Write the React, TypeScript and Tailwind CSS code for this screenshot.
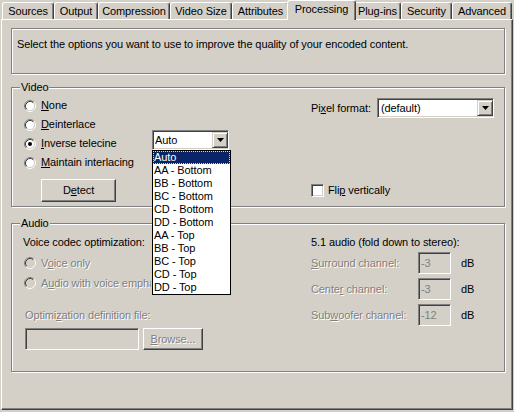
import React from 'react';

const sunken =
    'border border-t-[#808080] border-l-[#808080] border-b-white border-r-white shadow-[inset_1px_1px_0_#404040,inset_-1px_-1px_0_#d4d0c8]';
const raised =
    'border border-t-white border-l-white border-b-[#404040] border-r-[#404040] shadow-[inset_-1px_-1px_0_#808080] bg-[#d4d0c8]';
const etched = 'border border-[#808080] shadow-[inset_1px_1px_0_#fff,1px_1px_0_#fff]';
const dis = 'text-[#808080] [text-shadow:1px_1px_0_#fff]';

const tabs = [
    { label: 'Sources', w: 'w-[52px]' },
    { label: 'Output', w: 'w-[44px]' },
    { label: 'Compression', w: 'w-[72px]' },
    { label: 'Video Size', w: 'w-[62px]' },
    { label: 'Attributes', w: 'w-[57px]' },
    { label: 'Processing', w: 'w-[69px]', active: true },
    { label: 'Plug-ins', w: 'w-[47px]' },
    { label: 'Security', w: 'w-[51px]' },
    { label: 'Advanced', w: 'w-[60px]' },
];

const telecine = [
    'Auto',
    'AA - Bottom',
    'BB - Bottom',
    'BC - Bottom',
    'CD - Bottom',
    'DD - Bottom',
    'AA - Top',
    'BB - Top',
    'BC - Top',
    'CD - Top',
    'DD - Top',
];

function Radio({ checked = false, disabled = false }: { checked?: boolean; disabled?: boolean }) {
    return (
        <svg width="12" height="12" viewBox="0 0 12 12" className="shrink-0">
            <circle cx="6" cy="6" r="4.5" fill={disabled ? '#d4d0c8' : '#fff'} />
            <path d="M2.11 9.89A5.5 5.5 0 0 1 9.89 2.11" fill="none" stroke="#808080" />
            <path d="M9.89 2.11A5.5 5.5 0 0 1 2.11 9.89" fill="none" stroke="#fff" />
            <path d="M2.82 9.18A4.5 4.5 0 0 1 9.18 2.82" fill="none" stroke="#404040" />
            <path d="M9.18 2.82A4.5 4.5 0 0 1 2.82 9.18" fill="none" stroke="#d4d0c8" />
            {checked && <circle cx="6" cy="6" r="2" fill="#000" />}
        </svg>
    );
}

function Arrow() {
    return (
        <div className="border border-t-[#d4d0c8] border-l-[#d4d0c8] border-b-[#404040] border-r-[#404040] shadow-[inset_1px_1px_0_#fff,inset_-1px_-1px_0_#808080] bg-[#d4d0c8] w-[16px] h-[16px] ml-auto flex items-center justify-center">
            <svg width="7" height="4" viewBox="0 0 7 4">
                <path d="M0 0H7L3.5 4Z" fill="#000" />
            </svg>
        </div>
    );
}

function GroupLabel({ children }: { children: React.ReactNode }) {
    return (
        <span className="absolute -top-[7px] left-[8px] px-[1px] bg-[#d4d0c8] leading-[13px]">{children}</span>
    );
}

export default function App() {
    return (
        <div className="w-[514px] h-[412px] bg-[#d4d0c8] text-black text-[11px] leading-[13px] tracking-[-0.1px] font-['Liberation_Sans',Arial,sans-serif] overflow-hidden">
            {/* tab strip */}
            <div className="flex items-end h-[19px] pl-[2px]">
                {tabs.map((t) => (
                    <div
                        key={t.label}
                        className={`${t.w} flex items-center justify-center bg-[#d4d0c8] border-t border-l border-r border-t-white border-l-white border-r-[#404040] rounded-t-[3px] shadow-[inset_-1px_0_0_#808080] ${
                            t.active ? 'h-[20px] -mx-[2px] -mb-[1px] relative z-10 pb-[3px]' : 'h-[17px] pt-[1px]'
                        }`}
                    >
                        {t.label}
                    </div>
                ))}
            </div>

            {/* panel */}
            <div className="ml-[1px] w-[512px] h-[391px] border border-t-white border-l-white border-b-[#404040] border-r-[#404040] shadow-[inset_-1px_-1px_0_#808080] pl-[9px] pt-[8px]">
                <div className={`${etched} w-[494px] h-[46px] pl-[5px] pt-[9px]`}>
                    Select the options you want to use to improve the quality of your encoded content.
                </div>

                {/* Video */}
                <div className={`${etched} relative mt-[13px] w-[494px] h-[120px] pl-[12px] pt-[8px] flex`}>
                    <GroupLabel>Video</GroupLabel>
                    <div className="w-[287px] flex flex-col">
                        <div className="h-[19px] flex items-center">
                            <Radio />
                            <span className="ml-[5px]"><u>N</u>one</span>
                        </div>
                        <div className="h-[19px] flex items-center">
                            <Radio />
                            <span className="ml-[5px]"><u>D</u>einterlace</span>
                        </div>
                        <div className="h-[19px] flex items-center">
                            <div className="w-[128px] flex items-center">
                                <Radio checked />
                                <span className="ml-[5px]"><u>I</u>nverse telecine</span>
                            </div>
                            <div className={`${sunken} relative self-start -mt-[4px] w-[77px] h-[20px] bg-white flex items-center`}>
                                <span className="pl-[2px]">Auto</span>
                                <Arrow />
                                <div className="absolute top-[19px] -left-[1px] w-[79px] border border-black bg-white z-20">
                                    {telecine.map((o, i) => (
                                        <div
                                            key={o}
                                            className={`h-[13px] leading-[13px] pl-[1px] ${
                                                i === 0
                                                    ? 'bg-[#0a246a] text-white outline-1 outline-dotted outline-[#e9dca0] -outline-offset-1'
                                                    : ''
                                            }`}
                                        >
                                            {o}
                                        </div>
                                    ))}
                                </div>
                            </div>
                        </div>
                        <div className="h-[19px] flex items-center">
                            <Radio />
                            <span className="ml-[5px]"><u>M</u>aintain interlacing</span>
                        </div>
                        <div className={`${raised} mt-[7px] ml-[17px] w-[75px] h-[23px] flex items-center justify-center`}>
                            <span>D<u>e</u>tect</span>
                        </div>
                    </div>
                    <div className="flex flex-col">
                        <div className="mt-[2px] flex items-center">
                            <span className="w-[66px]">Pi<u>x</u>el format:</span>
                            <div className={`${sunken} w-[117px] h-[20px] bg-white flex items-center`}>
                                <span className="pl-[3px]">(default)</span>
                                <Arrow />
                            </div>
                        </div>
                        <div className="mt-[66px] flex items-center">
                            <div className={`${sunken} w-[13px] h-[13px] bg-white`} />
                            <span className="ml-[4px]">Fli<u>p</u> vertically</span>
                        </div>
                    </div>
                </div>

                {/* Audio */}
                <div className={`${etched} relative mt-[16px] w-[494px] h-[149px] pl-[11px] pt-[8px] flex`}>
                    <GroupLabel>Audio</GroupLabel>
                    <div className="w-[288px] flex flex-col">
                        <div className="h-[20px] flex items-center">Voice codec optimization:</div>
                        <div className="h-[20px] mt-[1px] flex items-center">
                            <span className="ml-[1px] flex"><Radio disabled /></span>
                            <span className={`ml-[5px] ${dis}`}>V<u>o</u>ice only</span>
                        </div>
                        <div className="h-[20px] flex items-center">
                            <span className="ml-[1px] flex"><Radio disabled /></span>
                            {/* the open list covers the end of this label */}
                            <span className={`ml-[5px] w-[110px] overflow-hidden whitespace-nowrap ${dis}`}>
                                A<u>u</u>dio with voice emphasis
                            </span>
                        </div>
                        <div className={`h-[20px] mt-[12px] ml-[2px] flex items-center ${dis}`}>
                            <span>Optimi<u>z</u>ation definition file:</span>
                        </div>
                        <div className="mt-[3px] ml-[2px] flex">
                            <div className={`${sunken} w-[114px] h-[22px] bg-[#d4d0c8]`} />
                            <div className={`${raised} ml-[4px] w-[60px] h-[22px] flex items-center justify-center`}>
                                <span className={dis}><u>B</u>rowse...</span>
                            </div>
                        </div>
                    </div>
                    <div className="flex flex-col">
                        <div className="h-[20px] flex items-center">5.1 audio (fold down to stereo):</div>
                        <div className="flex flex-col gap-[4px]">
                            {[
                                { pre: '', u: 'S', post: 'urround channel:', v: '-3' },
                                { pre: 'Cente', u: 'r', post: ' channel:', v: '-3' },
                                { pre: 'Sub', u: 'w', post: 'oofer channel:', v: '-12' },
                            ].map((r) => (
                                <div key={r.post} className="h-[22px] flex items-center">
                                    <span className={`w-[107px] ${dis}`}>
                                        {r.pre}
                                        <u>{r.u}</u>
                                        {r.post}
                                    </span>
                                    <div className={`${sunken} w-[33px] h-[22px] bg-[#d4d0c8] flex items-center pl-[2px] text-[#808080]`}>
                                        {r.v}
                                    </div>
                                    <span className="ml-[10px]">dB</span>
                                </div>
                            ))}
                        </div>
                    </div>
                </div>
            </div>
        </div>
    );
}
